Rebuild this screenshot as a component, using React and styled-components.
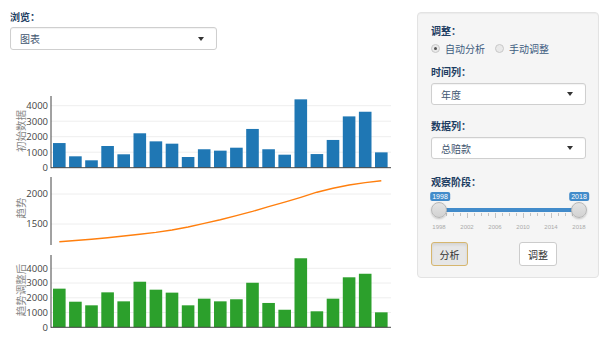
import React from 'react';
import styled, { createGlobalStyle } from 'styled-components';

const GlobalStyle = createGlobalStyle`
  html, body {
    margin: 0;
    padding: 0;
    background: #fff;
  }
  body {
    font-family: "Noto Sans CJK SC", "Open Sans", sans-serif;
    font-size: 10px;
    color: #333;
  }
`;

const raw = [1590, 735, 477, 1400, 865, 2220, 1700, 1550, 690, 1190, 1100, 1290, 2500, 1190, 840, 4410, 880, 1790, 3310, 3610, 990];
const trend = [1205, 1225, 1245, 1270, 1300, 1330, 1360, 1400, 1450, 1510, 1570, 1640, 1710, 1790, 1865, 1945, 2030, 2095, 2150, 2190, 2222];
const adjusted = [2620, 1735, 1490, 2370, 1760, 3090, 2550, 2350, 1490, 1940, 1760, 1900, 3020, 1650, 1190, 4680, 1085, 1940, 3390, 3630, 1015];

const PLOT_LEFT = 51;
const PLOT_RIGHT = 391;
const BAND = 16.1;
const BAR_W = 12.6;

const Page = styled.div`
  display: flex;
  align-items: flex-start;
  width: 606px;
  height: 339px;
  overflow: hidden;
`;

const LeftColumn = styled.div`
  width: 410px;
  display: flex;
  flex-direction: column;
`;

const BrowseGroup = styled.div`
  padding: 10px 0 0 10px;
`;

const Label = styled.div`
  font-weight: bold;
  font-size: 10px;
  line-height: 14px;
  color: #1d3d62;
  margin-top: ${p => p.$top || 0}px;
`;

const Select = styled.div`
  box-sizing: border-box;
  width: ${p => p.$width || '100%'};
  height: ${p => p.$height || 22}px;
  margin-top: ${p => p.$top || 4}px;
  padding: 0 12px 0 9px;
  display: flex;
  align-items: center;
  justify-content: space-between;
  background: #fff;
  border: 1px solid #cfcfcf;
  border-radius: 3px;
  box-shadow: inset 0 1px 1px rgba(0, 0, 0, 0.05);
  color: #3f5670;
  font-size: 10px;
`;

const Caret = styled.span`
  width: 0;
  height: 0;
  border-top: 4px solid #333;
  border-left: 3.5px solid transparent;
  border-right: 3.5px solid transparent;
`;

const ChartSvg = styled.svg`
  display: block;
  margin-top: 40px;
`;

const TickLabel = styled.text`
  font-family: "Open Sans", "Liberation Sans", sans-serif;
  font-size: 9.5px;
  fill: #444;
`;

const AxisTitle = styled.text`
  font-family: "Noto Sans CJK SC", sans-serif;
  font-size: 10.5px;
  fill: #8a8a8a;
`;

const Panel = styled.div`
  box-sizing: border-box;
  width: 182px;
  margin: 12px 0 0 7px;
  padding: 11px 12px 11px 13px;
  background: #f5f5f5;
  border: 1px solid #e3e3e3;
  border-radius: 4px;
  box-shadow: inset 0 1px 1px rgba(0, 0, 0, 0.04);
`;

const RadioRow = styled.div`
  display: flex;
  align-items: center;
  height: 14px;
  margin-top: 3px;
`;

const RadioOption = styled.label`
  display: flex;
  align-items: center;
  gap: 5px;
  margin-right: ${p => p.$gap || 0}px;
  color: #3d5c80;
  font-size: 10px;
`;

const RadioDot = styled.span`
  position: relative;
  box-sizing: border-box;
  width: 9px;
  height: 9px;
  border-radius: 50%;
  border: 1px solid #c8c8c8;
  background: #e9e9e9;

  &::after {
    content: '';
    display: ${p => (p.$checked ? 'block' : 'none')};
    position: absolute;
    left: 2px;
    top: 2px;
    width: 3px;
    height: 3px;
    border-radius: 50%;
    background: #555;
  }
`;

const Slider = styled.div`
  position: relative;
  height: 46px;
  margin-top: 1px;
`;

const Badge = styled.span`
  position: absolute;
  top: 2px;
  left: ${p => p.$center}px;
  transform: translateX(-50%);
  padding: 0 2px;
  height: 9px;
  line-height: 9px;
  border-radius: 2px;
  background: #428bca;
  color: #fff;
  font-family: "Liberation Sans", sans-serif;
  font-size: 7px;
`;

const Track = styled.div`
  position: absolute;
  left: 8px;
  right: 8px;
  top: 18px;
  height: 4px;
  background: #428bca;
`;

const Handle = styled.span`
  position: absolute;
  top: 12px;
  left: ${p => p.$center - 8}px;
  box-sizing: border-box;
  width: 16px;
  height: 16px;
  border-radius: 50%;
  border: 1px solid #b8b8b8;
  background: linear-gradient(#e4e4e4, #d2d2d2);
  box-shadow: 0 1px 2px rgba(0, 0, 0, 0.2);
`;

const Tick = styled.span`
  position: absolute;
  top: 23px;
  left: ${p => p.$x}px;
  width: 1px;
  height: ${p => (p.$major ? 5 : 3)}px;
  background: #c4c4c4;
`;

const GridLabel = styled.span`
  position: absolute;
  top: 34px;
  left: ${p => p.$x}px;
  transform: translateX(-50%);
  font-family: "Liberation Sans", sans-serif;
  font-size: 6px;
  color: #aaa;
`;

const ButtonRow = styled.div`
  display: flex;
  gap: 51px;
  margin-top: 6px;
`;

const Button = styled.div`
  box-sizing: border-box;
  width: ${p => p.$width}px;
  height: 24px;
  display: flex;
  align-items: center;
  justify-content: center;
  border-radius: 3px;
  font-size: 10px;
  color: #333;
  background: ${p => (p.$active ? '#e6e6e6' : '#fff')};
  border: 1px solid ${p => (p.$active ? '#d6b66e' : '#cccccc')};
  box-shadow: ${p => (p.$active ? 'inset 0 2px 3px rgba(0,0,0,0.08)' : 'none')};
`;

const barX = i => 53 + i * BAND;

const Gridlines = ({ ys }) =>
  ys.map(y => (
    <line key={y} x1={PLOT_LEFT} x2={PLOT_RIGHT} y1={y} y2={y} stroke="#eeeeee" strokeWidth="1" />
  ));

const Ticks = ({ items }) =>
  items.map(([label, y]) => (
    <TickLabel key={label} x="48" y={y + 3.3} textAnchor="end">
      {label}
    </TickLabel>
  ));

const BarPanel = ({ data, zeroY, per1000, top, color, title, titleY }) => {
  const levels = [0, 1000, 2000, 3000, 4000];
  return (
    <g>
      <Gridlines ys={levels.slice(1).map(v => zeroY - (v / 1000) * per1000)} />
      {data.map((v, i) => {
        const h = (v / 1000) * per1000;
        return <rect key={i} x={barX(i)} y={zeroY - h} width={BAR_W} height={h} fill={color} />;
      })}
      <line x1={PLOT_LEFT} x2={PLOT_RIGHT} y1={zeroY} y2={zeroY} stroke="#444" strokeWidth="1" />
      <line x1={PLOT_LEFT} x2={PLOT_LEFT} y1={top} y2={zeroY + 0.5} stroke="#444" strokeWidth="1" />
      <Ticks items={levels.map(v => [String(v), zeroY - (v / 1000) * per1000])} />
      <AxisTitle x="22" y={titleY} textAnchor="middle" dominantBaseline="middle" transform={`rotate(-90 22 ${titleY})`}>
        {title}
      </AxisTitle>
    </g>
  );
};

const TrendPanel = () => {
  const yOf = v => 194 - (v - 2000) * 0.06;
  const d = trend.map((v, i) => `${i ? 'L' : 'M'}${(barX(i) + BAR_W / 2).toFixed(1)} ${yOf(v).toFixed(1)}`).join(' ');
  return (
    <g>
      <Gridlines ys={[yOf(1500), yOf(2000)]} />
      <path d={d} fill="none" stroke="#ff7f0e" strokeWidth="1.4" strokeLinejoin="round" />
      <line x1={PLOT_LEFT} x2={PLOT_LEFT} y1="177" y2="245" stroke="#444" strokeWidth="1" />
      <Ticks items={[['1500', yOf(1500)], ['2000', yOf(2000)]]} />
      <AxisTitle x="22" y="208" textAnchor="middle" dominantBaseline="middle" transform="rotate(-90 22 208)">
        趋势
      </AxisTitle>
    </g>
  );
};

const Chart = () => (
  <ChartSvg width="400" height="249" viewBox="0 90 400 249">
    <BarPanel data={raw} zeroY={167.7} per1000={15.5} top={96} color="#1f77b4" title="初始数据" titleY={131} />
    <TrendPanel />
    <BarPanel data={adjusted} zeroY={327.3} per1000={14.75} top={255} color="#2ca02c" title="趋势调整后" titleY={290} />
  </ChartSvg>
);

const years = ['1998', '2002', '2006', '2010', '2014', '2018'];

const RangeSlider = () => (
  <Slider>
    <Track />
    {Array.from({ length: 21 }, (_, i) => (
      <Tick key={i} $x={8 + i * 7} $major={i % 4 === 0} />
    ))}
    {years.map((y, k) => (
      <GridLabel key={y} $x={8 + k * 28}>
        {y}
      </GridLabel>
    ))}
    <Handle $center={8} />
    <Handle $center={148} />
    <Badge $center={9}>1998</Badge>
    <Badge $center={148}>2018</Badge>
  </Slider>
);

export default function App() {
  return (
    <>
      <GlobalStyle />
      <Page>
        <LeftColumn>
          <BrowseGroup>
            <Label>浏览：</Label>
            <Select $width="207px" $height={23} $top={3}>
              图表
              <Caret />
            </Select>
          </BrowseGroup>
          <Chart />
        </LeftColumn>
        <Panel>
          <Label>调整：</Label>
          <RadioRow>
            <RadioOption $gap={10}>
              <RadioDot $checked />
              自动分析
            </RadioOption>
            <RadioOption>
              <RadioDot />
              手动调整
            </RadioOption>
          </RadioRow>
          <Label $top={10}>时间列：</Label>
          <Select>
            年度
            <Caret />
          </Select>
          <Label $top={14}>数据列：</Label>
          <Select>
            总赔款
            <Caret />
          </Select>
          <Label $top={16}>观察阶段：</Label>
          <RangeSlider />
          <ButtonRow>
            <Button $width={37} $active>
              分析
            </Button>
            <Button $width={38}>调整</Button>
          </ButtonRow>
        </Panel>
      </Page>
    </>
  );
}
